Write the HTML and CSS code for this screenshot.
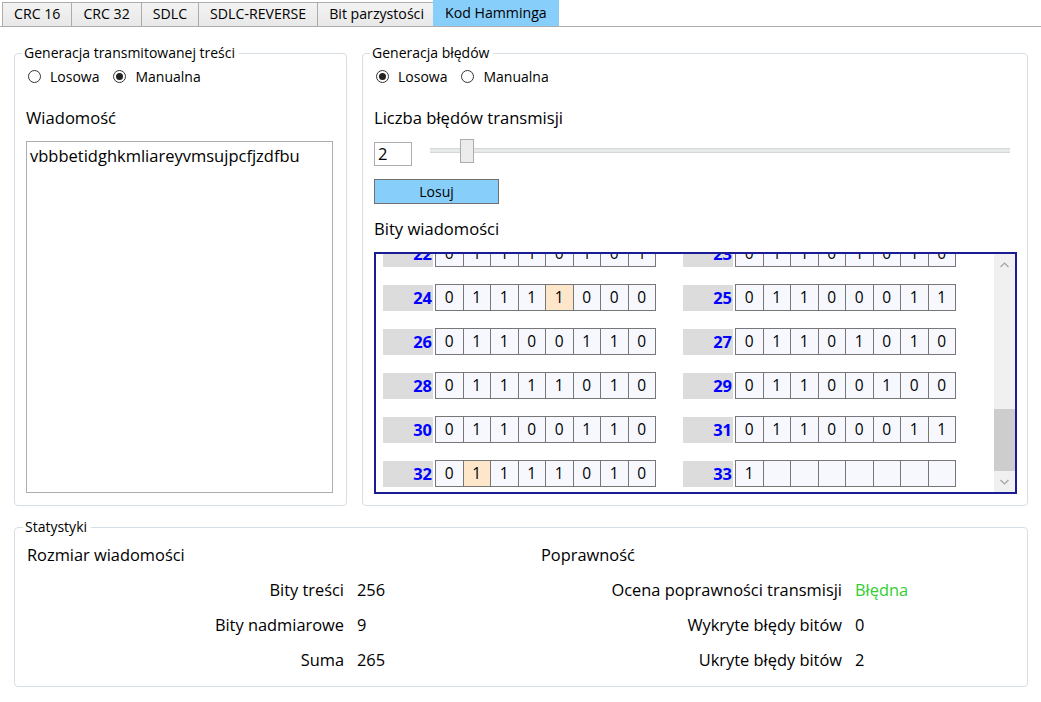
FILE: index.html
```html
<!DOCTYPE html>
<html lang="pl">
<head>
<meta charset="utf-8">
<title>Kod Hamminga</title>
<link rel="stylesheet" href="styles.css">
</head>
<body>
<nav class="tabs">
  <div class="tab">CRC 16</div>
  <div class="tab">CRC 32</div>
  <div class="tab">SDLC</div>
  <div class="tab">SDLC-REVERSE</div>
  <div class="tab">Bit parzystości</div>
  <div class="tab active">Kod Hamminga</div>
</nav>
<main class="content">
  <div class="top">
    <fieldset class="group group-left">
      <legend>Generacja transmitowanej treści</legend>
      <div class="radios">
        <label class="radio"><span class="dot"></span>Losowa</label>
        <label class="radio"><span class="dot checked"></span>Manualna</label>
      </div>
      <div class="heading">Wiadomość</div>
      <div class="textarea">vbbbetidghkmliareyvmsujpcfjzdfbu</div>
    </fieldset>
    <fieldset class="group group-right">
      <legend>Generacja błędów</legend>
      <div class="radios">
        <label class="radio"><span class="dot checked"></span>Losowa</label>
        <label class="radio"><span class="dot"></span>Manualna</label>
      </div>
      <div class="big-heading">Liczba błędów transmisji</div>
      <div class="slider-row">
        <div class="numbox">2</div>
        <div class="slider"><span class="thumb"></span></div>
      </div>
      <div class="button">Losuj</div>
      <div class="heading heading-bits">Bity wiadomości</div>
      <div class="bits">
        <div class="bits-view">
          <div class="bits-list">
            <div class="bit-row">
              <div class="byte"><span class="idx">22</span><div class="cells"><span>0</span><span>1</span><span>1</span><span>1</span><span>0</span><span>1</span><span>0</span><span>1</span></div></div>
              <div class="byte"><span class="idx">23</span><div class="cells"><span>0</span><span>1</span><span>1</span><span>0</span><span>1</span><span>0</span><span>1</span><span>0</span></div></div>
            </div>
            <div class="bit-row">
              <div class="byte"><span class="idx">24</span><div class="cells"><span>0</span><span>1</span><span>1</span><span>1</span><span class="err">1</span><span>0</span><span>0</span><span>0</span></div></div>
              <div class="byte"><span class="idx">25</span><div class="cells"><span>0</span><span>1</span><span>1</span><span>0</span><span>0</span><span>0</span><span>1</span><span>1</span></div></div>
            </div>
            <div class="bit-row">
              <div class="byte"><span class="idx">26</span><div class="cells"><span>0</span><span>1</span><span>1</span><span>0</span><span>0</span><span>1</span><span>1</span><span>0</span></div></div>
              <div class="byte"><span class="idx">27</span><div class="cells"><span>0</span><span>1</span><span>1</span><span>0</span><span>1</span><span>0</span><span>1</span><span>0</span></div></div>
            </div>
            <div class="bit-row">
              <div class="byte"><span class="idx">28</span><div class="cells"><span>0</span><span>1</span><span>1</span><span>1</span><span>1</span><span>0</span><span>1</span><span>0</span></div></div>
              <div class="byte"><span class="idx">29</span><div class="cells"><span>0</span><span>1</span><span>1</span><span>0</span><span>0</span><span>1</span><span>0</span><span>0</span></div></div>
            </div>
            <div class="bit-row">
              <div class="byte"><span class="idx">30</span><div class="cells"><span>0</span><span>1</span><span>1</span><span>0</span><span>0</span><span>1</span><span>1</span><span>0</span></div></div>
              <div class="byte"><span class="idx">31</span><div class="cells"><span>0</span><span>1</span><span>1</span><span>0</span><span>0</span><span>0</span><span>1</span><span>1</span></div></div>
            </div>
            <div class="bit-row">
              <div class="byte"><span class="idx">32</span><div class="cells"><span>0</span><span class="err">1</span><span>1</span><span>1</span><span>1</span><span>0</span><span>1</span><span>0</span></div></div>
              <div class="byte"><span class="idx">33</span><div class="cells"><span>1</span><span></span><span></span><span></span><span></span><span></span><span></span><span></span></div></div>
            </div>
          </div>
        </div>
        <div class="scrollbar">
          <div class="sb-btn"><svg width="9" height="6" viewBox="0 0 9 6"><polyline points="0.5,5 4.5,1 8.5,5" fill="none" stroke="#a3a3a3" stroke-width="1.2"/></svg></div>
          <div class="sb-track"><div class="sb-thumb"></div></div>
          <div class="sb-btn"><svg width="9" height="6" viewBox="0 0 9 6"><polyline points="0.5,1 4.5,5 8.5,1" fill="none" stroke="#a3a3a3" stroke-width="1.2"/></svg></div>
        </div>
      </div>
    </fieldset>
  </div>
  <fieldset class="group stats">
    <legend>Statystyki</legend>
    <div class="stats-body">
      <section class="stat-col stat-size">
        <div class="stat-title">Rozmiar wiadomości</div>
        <div class="stat-grid">
          <span class="stat-label">Bity treści</span><span class="stat-value">256</span>
          <span class="stat-label">Bity nadmiarowe</span><span class="stat-value">9</span>
          <span class="stat-label">Suma</span><span class="stat-value">265</span>
        </div>
      </section>
      <section class="stat-col stat-valid">
        <div class="stat-title">Poprawność</div>
        <div class="stat-grid">
          <span class="stat-label">Ocena poprawności transmisji</span><span class="stat-value bad">Błędna</span>
          <span class="stat-label">Wykryte błędy bitów</span><span class="stat-value">0</span>
          <span class="stat-label">Ukryte błędy bitów</span><span class="stat-value">2</span>
        </div>
      </section>
    </div>
  </fieldset>
</main>
</body>
</html>
```

FILE: styles.css
```css
* { box-sizing: border-box; }
html, body { margin: 0; padding: 0; }
body {
  width: 1041px;
  height: 702px;
  overflow: hidden;
  background: #fff;
  color: #000;
  font-family: "Open Sans", "Noto Sans", sans-serif;
}

/* Tabs */
.tabs {
  display: flex;
  align-items: flex-end;
  height: 27px;
  padding-left: 2px;
  border-bottom: 1px solid #acacac;
}
.tab {
  height: 24px;
  padding: 0 11px;
  margin-right: -1px;
  border: 1px solid #acacac;
  border-bottom: none;
  background: linear-gradient(#f3f3f3, #e8e8e8);
  font-size: 14.15px;
  line-height: 22px;
  white-space: nowrap;
}
.tab.active {
  height: 26px;
  padding: 0 11px;
  margin-left: -2px;
  background: #87cefa;
  border-color: #87cefa;
  line-height: 24px;
}

/* Content */
.content {
  padding: 18px 13px 0 14px;
}
.top {
  display: grid;
  grid-template-columns: 333px 666px;
  column-gap: 15px;
}
.group {
  margin: 0;
  min-width: 0;
  border: 1px solid #d5dfe5;
  border-radius: 4px;
  padding: 0 13px 12px 11px;
  display: flex;
  flex-direction: column;
}
.group legend {
  font-size: 14px;
  line-height: 16px;
  padding: 0 4px 0 2px;
  margin-left: -4px;
}
.group-right {
  padding: 0 10px 11px 11px;
}

.radios {
  display: flex;
  align-items: center;
  height: 20px;
  margin: 5px 0 0 2px;
}
.radio {
  display: flex;
  align-items: center;
  gap: 9px;
  margin-right: 14px;
  font-size: 14px;
}
.dot {
  width: 13px;
  height: 13px;
  border: 1px solid #333;
  border-radius: 50%;
  background: #fff;
  display: flex;
  align-items: center;
  justify-content: center;
}
.dot.checked::after {
  content: "";
  width: 7px;
  height: 7px;
  border-radius: 50%;
  background: #222;
}

.heading {
  font-size: 16.6px;
  line-height: 24px;
  margin-top: 20px;
}
.textarea {
  flex: 1;
  margin-top: 11px;
  border: 1px solid #abadb3;
  padding: 2px 3px;
  font-size: 16.5px;
  line-height: 24px;
}

.big-heading {
  font-size: 16.6px;
  line-height: 26px;
  margin-top: 19px;
}
.slider-row {
  display: flex;
  margin-top: 11px;
  height: 24px;
}
.numbox {
  width: 38px;
  height: 24px;
  border: 1px solid #abadb3;
  padding-left: 3px;
  font-size: 16.5px;
  line-height: 22px;
}
.slider {
  flex: 1;
  align-self: flex-start;
  height: 24px;
  margin: -3px 7px 0 18px;
  display: flex;
  background: linear-gradient(to bottom,
    transparent 9px, #d6d6d6 9px, #d6d6d6 10px,
    #e7eaea 10px, #e7eaea 13px, #d6d6d6 13px, #d6d6d6 14px, transparent 14px);
}
.thumb {
  width: 14px;
  height: 24px;
  margin-left: 30px;
  background: #ececec;
  border: 1px solid #acacac;
}
.button {
  width: 125px;
  height: 25px;
  margin-top: 13px;
  border: 1px solid #707070;
  background: #87cefa;
  font-size: 14px;
  line-height: 23px;
  text-align: center;
}
.heading-bits { margin-top: 13px; }

/* Bits grid */
.bits {
  height: 242px;
  margin-top: 11px;
  border: 2px solid #1b1b95;
  display: flex;
}
.bits-view {
  flex: 1;
  overflow: hidden;
}
.bits-list {
  margin-top: -14px;
  padding-left: 7px;
  display: flex;
  flex-direction: column;
  gap: 17px;
}
.bit-row {
  display: flex;
  gap: 27px;
}
.byte {
  display: flex;
  align-items: center;
}
.idx {
  width: 50px;
  height: 26px;
  margin-right: 2px;
  padding-right: 1px;
  background: #dcdcdc;
  color: #0000ff;
  font-weight: 700;
  font-size: 16.5px;
  line-height: 26px;
  text-align: right;
}
.cells {
  display: flex;
  border-left: 1px solid #777;
}
.cells span {
  width: 27.5px;
  height: 27px;
  border: 1px solid #777;
  border-left: none;
  background: #f6f8fe;
  font-size: 15.5px;
  line-height: 25px;
  text-align: center;
}
.cells span.err { background: #fde6c9; }

.scrollbar {
  width: 21px;
  background: #f0f0f0;
  display: flex;
  flex-direction: column;
}
.sb-btn {
  height: 21px;
  display: flex;
  align-items: center;
  justify-content: center;
}
.sb-track {
  flex: 1;
  display: flex;
  flex-direction: column;
  justify-content: flex-end;
}
.sb-thumb {
  height: 62px;
  background: #cdcdcd;
}

/* Stats */
.stats {
  margin-top: 13px;
  padding: 2px 12px 9px 12px;
}
.stats-body {
  display: flex;
}
.stat-col {
  font-size: 16.4px;
  line-height: 35px;
}
.stat-size { width: 514px; }
.stat-grid {
  display: grid;
  column-gap: 13px;
}
.stat-size .stat-grid { grid-template-columns: 317px auto; }
.stat-valid .stat-grid { grid-template-columns: 301px auto; }
.stat-label { text-align: right; }
.stat-value.bad { color: #32cd32; }
```
